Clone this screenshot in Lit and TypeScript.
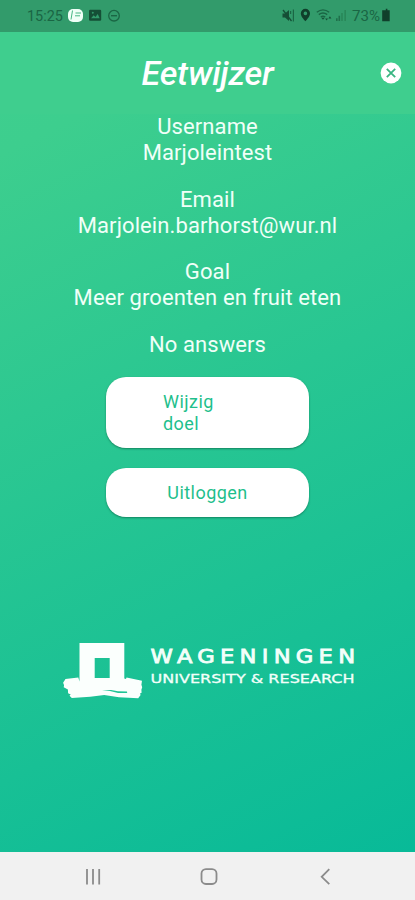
import { LitElement, html, css } from "lit";
import { customElement } from "lit/decorators.js";

@customElement("status-bar")
class StatusBar extends LitElement {
  static styles = css`
    :host { display: block; height: 32px; background: #329b6b; flex: none; }
    svg { display: block; }
    text { font-family: Roboto, sans-serif; font-size: 14px; fill: #1a6644; }
  `;
  render() {
    return html`<svg width="415" height="32" viewBox="0 0 415 32" fill="none">
      <text x="27" y="21" textLength="36" lengthAdjust="spacingAndGlyphs">15:25</text>
      <rect x="68" y="9" width="15" height="13" rx="5" fill="#effff7"/>
      <path d="M72.5 10.5l-1.5 9M75.5 13h5.5M75 15.8h5" stroke="#46b783" stroke-width="1"/>
      <rect x="89" y="9.8" width="12.2" height="11" rx="1.2" fill="#154f36"/>
      <path d="M91 18.3l2.7-3.1 1.8 1.7 2.2-2.9 2 4.3z" fill="#329b6b"/>
      <circle cx="92.8" cy="12.8" r="1" fill="#329b6b"/>
      <circle cx="114" cy="15.7" r="5.3" stroke="#1a6644" stroke-width="1.3"/>
      <path d="M111 15.7h6" stroke="#1a6644" stroke-width="1.4"/>
      <path d="M282.5 13.5h2.5l4-3.5v11l-4-3.5h-2.5z" fill="#154f36"/>
      <path d="M283 10l8.5 11" stroke="#154f36" stroke-width="1.3"/>
      <path d="M290.6 11v3M293.4 9.5v12" stroke="#1a6644" stroke-width="1.2"/>
      <path fill-rule="evenodd" d="M305.4 8.8a4.6 4.6 0 0 0-4.6 4.7c0 3.4 4.6 7.7 4.6 7.7s4.6-4.3 4.6-7.7a4.6 4.6 0 0 0-4.6-4.7zm0 2.8a1.8 1.8 0 1 1 0 3.6 1.8 1.8 0 0 1 0-3.6z" fill="#103f2b"/>
      <path d="M316.8 12.2q6.2-4.7 12.4 0M318.8 14.6q4.2-3.2 8.4 0M320.8 17q2.2-1.6 4.4 0" stroke="#1a6644" stroke-width="1.4"/>
      <path d="M321.3 17.8h3.4l-1.7 2zM325.2 18.4h2.8l-1.4 2.2zM328.4 18.6l1.5-2.4 1.5 2.4z" fill="#154f36"/>
      <path d="M336.8 21v-2.8M339.3 21v-5.2" stroke="#1f704b" stroke-width="1.6"/>
      <path d="M342 21v-8M345.2 21v-11" stroke="#298859" stroke-width="1.6"/>
      <text x="352" y="21" textLength="28" lengthAdjust="spacingAndGlyphs">73%</text>
      <path d="M384 10.2h1.8v-1.5h1.6v1.5h2.3v11h-7.5v-11z" fill="#103f2b"/>
    </svg>`;
  }
}

@customElement("wur-logo")
class WurLogo extends LitElement {
  static styles = css`
    :host { display: block; }
    svg { display: block; overflow: visible; }
    text { font-family: "DejaVu Sans", sans-serif; fill: #f3fffa; stroke: #f3fffa; }
    .name { font-size: 14.6px; stroke-width: .6px; }
    .sub { font-size: 12.4px; stroke-width: .3px; }
  `;
  render() {
    return html`<svg width="310" height="62" viewBox="62 640 310 62">
      <path fill="#fbfffd" fill-rule="evenodd" d="M79.5 643h44.8v35.6l1.6.4.7-1.6 15.4 3.4-.6 4 .8 2.5-.8 2.4.2 3-1.6.8.6 1.6-2.4 3.2-19.2-1-14.8-2.2-14 1.7-18.4 1.2-2.3-2.2 1.2-1.2-2.6-1.4-.2-3.6-4.2-2.3.4-2-1-2.6 2.4-3.8 12.8-1.3 1.2 3.8zM94.7 658v20h15v-20z"/>
      <path d="M102 690.3l9-.2 7 1.2 9 .2.2 1.6-9.2-.2-8-1.8z" fill="#20c496"/>
      <text class="name" transform="translate(150.5 662.7) scale(1.55 1.32)" textLength="132">WAGENINGEN</text>
      <text class="sub" x="150.5" y="682.6" textLength="204" lengthAdjust="spacingAndGlyphs">UNIVERSITY &amp; RESEARCH</text>
    </svg>`;
  }
}

@customElement("nav-bar")
class NavBar extends LitElement {
  static styles = css`
    :host { display: block; height: 48px; background: #f1f1f1; flex: none; }
    svg { display: block; }
  `;
  render() {
    return html`<svg width="415" height="48" viewBox="0 852 415 48" fill="none" stroke="#8b8b8b">
      <path d="M87 869v15.4M93 869v15.4M99.2 869v15.4" stroke-width="1.8"/>
      <rect x="201.5" y="869.2" width="15" height="14.8" rx="4.4" stroke-width="1.8"/>
      <path d="M329.3 869.2l-7.6 7.6 7.6 7.4" stroke-width="1.8"/>
    </svg>`;
  }
}

@customElement("app-root")
class AppRoot extends LitElement {
  static styles = css`
    :host {
      display: flex; flex-direction: column; width: 415px; height: 900px;
      overflow: hidden; font-family: Roboto, sans-serif; color: #f0fff8;
    }
    .screen {
      flex: 1; min-height: 0; display: flex; flex-direction: column; align-items: center;
      background: linear-gradient(154deg, #3fcf8e 0%, #3dce8e 12%, #08ba98 100%);
    }
    header {
      width: 415px; height: 82px; flex: none; display: grid;
      grid-template-columns: 48px 1fr 48px; align-items: center; background: #3fce8e;
    }
    h1 {
      grid-column: 2; margin: 0; text-align: center; color: #fff;
      font-size: 34px; line-height: 40px; font-weight: 500; font-style: italic;
      letter-spacing: -.2px;
    }
    .close { display: block; margin-left: 13px; }
    .profile {
      display: flex; flex-direction: column; gap: 20.2px; text-align: center;
      font-size: 22px; line-height: 26.2px; white-space: nowrap; letter-spacing: .1px;
    }
    .actions { display: flex; flex-direction: column; gap: 20px; margin-top: 19px; }
    button {
      width: 203px; height: 49px; border: 0; border-radius: 20px; padding: 1px 0 0;
      display: flex; align-items: center; justify-content: center;
      background: #fff; color: #1fbf8c; box-shadow: 0 1px 2px rgba(0, 70, 45, .5);
      font: 450 18px/22px Roboto, sans-serif; letter-spacing: .45px; text-align: left;
    }
    .tall { height: 71px; }
    .tall span { width: 89px; }
    wur-logo { margin: 123px 0 0 19px; }
  `;
  render() {
    return html`
      <status-bar></status-bar>
      <div class="screen">
        <header>
          <h1>Eetwijzer</h1>
          <svg class="close" width="22" height="22" viewBox="0 0 22 22">
            <circle cx="11" cy="11" r="10.4" fill="#fff"/>
            <path d="M6.8 6.8l8.4 8.4M15.2 6.8l-8.4 8.4" stroke="#39b582" stroke-width="1.8"/>
          </svg>
        </header>
        <div class="profile">
          <div>Username<br>Marjoleintest</div>
          <div>Email<br>Marjolein.barhorst@wur.nl</div>
          <div>Goal<br>Meer groenten en fruit eten</div>
          <div>No answers</div>
        </div>
        <div class="actions">
          <button class="tall"><span>Wijzig<br>doel</span></button>
          <button>Uitloggen</button>
        </div>
        <wur-logo></wur-logo>
      </div>
      <nav-bar></nav-bar>
    `;
  }
}
